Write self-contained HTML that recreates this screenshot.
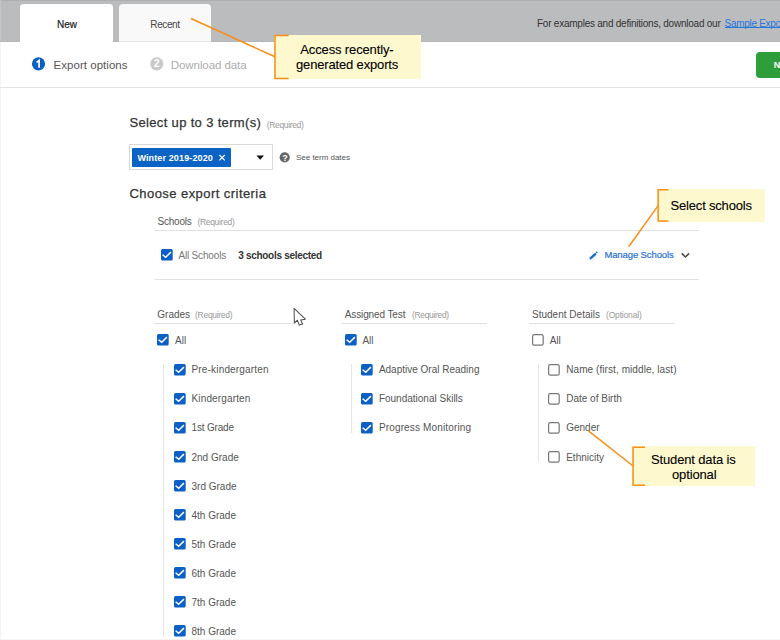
<!DOCTYPE html><html><head><meta charset="utf-8"><style>html,body{margin:0;padding:0;width:780px;height:640px;overflow:hidden;background:#fff;position:relative;}body{font-family:"Liberation Sans", sans-serif;} .t{position:absolute;white-space:nowrap;line-height:normal;font-family:"Liberation Sans", sans-serif;}</style></head><body>
<div style="position:absolute;left:0px;top:0px;width:780px;height:42px;background:#bbbcbe;"></div>
<div style="position:absolute;left:0px;top:0px;width:780px;height:1px;background:#aeafb1;"></div>
<div style="position:absolute;left:0px;top:0px;width:1px;height:42px;background:#c4c5c7;"></div>
<div style="position:absolute;left:0px;top:42px;width:1px;height:598px;background:#f3f3f3;"></div>
<div style="position:absolute;left:0px;top:41px;width:780px;height:1px;background:#b5b6b9;"></div>
<div style="position:absolute;left:20.2px;top:4.1px;width:93px;height:37.9px;background:#fff;border-radius:3.5px 3.5px 0 0;"></div>
<div style="position:absolute;left:118.7px;top:4.2px;width:92.5px;height:37.8px;background:#f9f9f9;border-radius:4px 4px 0 0;"></div>
<div style="position:absolute;left:118.7px;top:41px;width:92.5px;height:1px;background:#e6e6e6;"></div>
<div style="position:absolute;left:724.6px;top:27.2px;width:56px;height:1px;background:#2677dc;z-index:1;"></div>
<div style="position:absolute;left:0px;top:86.5px;width:780px;height:1px;background:#e3e3e3;"></div>
<svg style="position:absolute;left:0;top:0" width="780" height="640"><circle cx="38.5" cy="63.8" r="6.6" fill="#0b5fc0"/><circle cx="156.8" cy="63.8" r="6.6" fill="#c9c9c9"/><path d="M36.6 62.4 L39.1 60.4 L39.1 67.7" fill="none" stroke="#fff" stroke-width="1.7" stroke-linejoin="miter"/></svg>
<div style="position:absolute;left:756px;top:52.3px;width:40px;height:25.5px;background:#2e9e3a;border-radius:4px;"></div>
<div style="position:absolute;left:128.5px;top:144.2px;width:144.3px;height:26px;box-sizing:border-box;border:1px solid #d9d9d9;background:#fff;"></div>
<div style="position:absolute;left:132.3px;top:148px;width:98.7px;height:19px;background:#0b63c5;border-radius:1px;"></div>
<svg style="position:absolute;left:0;top:0" width="780" height="640"><path d="M219.4 155 L224.8 160.4 M224.8 155 L219.4 160.4" stroke="#fff" stroke-width="1.15"/><path d="M256.4 155.4 L264 155.4 L260.2 159.8 Z" fill="#111"/><circle cx="284.7" cy="157.3" r="5.1" fill="#666"/></svg>
<div style="position:absolute;left:154.6px;top:229.8px;width:544.4px;height:1px;background:#e1e1e1;"></div>
<div style="position:absolute;left:154.6px;top:278.6px;width:544.4px;height:1px;background:#e1e1e1;"></div>
<svg style="position:absolute;left:160.8px;top:249.2px" width="12" height="12"><rect x="0" y="0" width="11.7" height="11.6" rx="1.6" fill="#0a60c4"/><path d="M1.6 5.7 L4.7 8.3 L9.9 3.1" fill="none" stroke="#fff" stroke-width="1.5"/></svg>
<svg style="position:absolute;left:0;top:0" width="780" height="640"><path d="M590.7 258.1 L595.1 254.3" fill="none" stroke="#1a6fd6" stroke-width="2.5" stroke-linecap="round"/><path d="M596.6 251.3 L597.8 252.5 L596.8 253.5 L595.6 252.3 Z" fill="#1a6fd6"/><path d="M681.7 253.4 L685.4 257 L689.1 253.4" fill="none" stroke="#4a4a4a" stroke-width="1.6"/></svg>
<div style="position:absolute;left:154.2px;top:323.2px;width:139.8px;height:1px;background:#e1e1e1;"></div>
<svg style="position:absolute;left:157.3px;top:334.4px" width="12" height="12"><rect x="0" y="0" width="11.7" height="11.6" rx="1.6" fill="#0a60c4"/><path d="M1.6 5.7 L4.7 8.3 L9.9 3.1" fill="none" stroke="#fff" stroke-width="1.5"/></svg>
<div style="position:absolute;left:163.20000000000002px;top:363.5px;width:1px;height:273.5px;background:#e6e6e6;"></div>
<svg style="position:absolute;left:173.60000000000002px;top:363.5px" width="12" height="12"><rect x="0" y="0" width="11.7" height="11.6" rx="1.6" fill="#0a60c4"/><path d="M1.6 5.7 L4.7 8.3 L9.9 3.1" fill="none" stroke="#fff" stroke-width="1.5"/></svg>
<svg style="position:absolute;left:173.60000000000002px;top:392.56px" width="12" height="12"><rect x="0" y="0" width="11.7" height="11.6" rx="1.6" fill="#0a60c4"/><path d="M1.6 5.7 L4.7 8.3 L9.9 3.1" fill="none" stroke="#fff" stroke-width="1.5"/></svg>
<svg style="position:absolute;left:173.60000000000002px;top:421.62px" width="12" height="12"><rect x="0" y="0" width="11.7" height="11.6" rx="1.6" fill="#0a60c4"/><path d="M1.6 5.7 L4.7 8.3 L9.9 3.1" fill="none" stroke="#fff" stroke-width="1.5"/></svg>
<svg style="position:absolute;left:173.60000000000002px;top:450.68px" width="12" height="12"><rect x="0" y="0" width="11.7" height="11.6" rx="1.6" fill="#0a60c4"/><path d="M1.6 5.7 L4.7 8.3 L9.9 3.1" fill="none" stroke="#fff" stroke-width="1.5"/></svg>
<svg style="position:absolute;left:173.60000000000002px;top:479.74px" width="12" height="12"><rect x="0" y="0" width="11.7" height="11.6" rx="1.6" fill="#0a60c4"/><path d="M1.6 5.7 L4.7 8.3 L9.9 3.1" fill="none" stroke="#fff" stroke-width="1.5"/></svg>
<svg style="position:absolute;left:173.60000000000002px;top:508.79999999999995px" width="12" height="12"><rect x="0" y="0" width="11.7" height="11.6" rx="1.6" fill="#0a60c4"/><path d="M1.6 5.7 L4.7 8.3 L9.9 3.1" fill="none" stroke="#fff" stroke-width="1.5"/></svg>
<svg style="position:absolute;left:173.60000000000002px;top:537.86px" width="12" height="12"><rect x="0" y="0" width="11.7" height="11.6" rx="1.6" fill="#0a60c4"/><path d="M1.6 5.7 L4.7 8.3 L9.9 3.1" fill="none" stroke="#fff" stroke-width="1.5"/></svg>
<svg style="position:absolute;left:173.60000000000002px;top:566.92px" width="12" height="12"><rect x="0" y="0" width="11.7" height="11.6" rx="1.6" fill="#0a60c4"/><path d="M1.6 5.7 L4.7 8.3 L9.9 3.1" fill="none" stroke="#fff" stroke-width="1.5"/></svg>
<svg style="position:absolute;left:173.60000000000002px;top:595.98px" width="12" height="12"><rect x="0" y="0" width="11.7" height="11.6" rx="1.6" fill="#0a60c4"/><path d="M1.6 5.7 L4.7 8.3 L9.9 3.1" fill="none" stroke="#fff" stroke-width="1.5"/></svg>
<svg style="position:absolute;left:173.60000000000002px;top:625.04px" width="12" height="12"><rect x="0" y="0" width="11.7" height="11.6" rx="1.6" fill="#0a60c4"/><path d="M1.6 5.7 L4.7 8.3 L9.9 3.1" fill="none" stroke="#fff" stroke-width="1.5"/></svg>
<div style="position:absolute;left:341.8px;top:323.2px;width:145.0px;height:1px;background:#e1e1e1;"></div>
<svg style="position:absolute;left:344.7px;top:334.4px" width="12" height="12"><rect x="0" y="0" width="11.7" height="11.6" rx="1.6" fill="#0a60c4"/><path d="M1.6 5.7 L4.7 8.3 L9.9 3.1" fill="none" stroke="#fff" stroke-width="1.5"/></svg>
<div style="position:absolute;left:350.59999999999997px;top:363.5px;width:1px;height:69.6px;background:#e6e6e6;"></div>
<svg style="position:absolute;left:361.0px;top:363.5px" width="12" height="12"><rect x="0" y="0" width="11.7" height="11.6" rx="1.6" fill="#0a60c4"/><path d="M1.6 5.7 L4.7 8.3 L9.9 3.1" fill="none" stroke="#fff" stroke-width="1.5"/></svg>
<svg style="position:absolute;left:361.0px;top:392.56px" width="12" height="12"><rect x="0" y="0" width="11.7" height="11.6" rx="1.6" fill="#0a60c4"/><path d="M1.6 5.7 L4.7 8.3 L9.9 3.1" fill="none" stroke="#fff" stroke-width="1.5"/></svg>
<svg style="position:absolute;left:361.0px;top:421.62px" width="12" height="12"><rect x="0" y="0" width="11.7" height="11.6" rx="1.6" fill="#0a60c4"/><path d="M1.6 5.7 L4.7 8.3 L9.9 3.1" fill="none" stroke="#fff" stroke-width="1.5"/></svg>
<div style="position:absolute;left:529.2px;top:323.2px;width:144.79999999999995px;height:1px;background:#e1e1e1;"></div>
<svg style="position:absolute;left:532.0px;top:334.4px" width="12" height="12"><rect x="0.6" y="0.6" width="10.6" height="10.6" rx="1.6" fill="#fff" stroke="#777" stroke-width="1.2"/></svg>
<div style="position:absolute;left:537.9px;top:363.5px;width:1px;height:98.6px;background:#e6e6e6;"></div>
<svg style="position:absolute;left:548.3px;top:363.5px" width="12" height="12"><rect x="0.6" y="0.6" width="10.6" height="10.6" rx="1.6" fill="#fff" stroke="#777" stroke-width="1.2"/></svg>
<svg style="position:absolute;left:548.3px;top:392.56px" width="12" height="12"><rect x="0.6" y="0.6" width="10.6" height="10.6" rx="1.6" fill="#fff" stroke="#777" stroke-width="1.2"/></svg>
<svg style="position:absolute;left:548.3px;top:421.62px" width="12" height="12"><rect x="0.6" y="0.6" width="10.6" height="10.6" rx="1.6" fill="#fff" stroke="#777" stroke-width="1.2"/></svg>
<svg style="position:absolute;left:548.3px;top:450.68px" width="12" height="12"><rect x="0.6" y="0.6" width="10.6" height="10.6" rx="1.6" fill="#fff" stroke="#777" stroke-width="1.2"/></svg>
<div style="position:absolute;left:0px;top:638.6px;width:780px;height:1.4px;background:#f5f5f5;"></div>
<div style="position:absolute;z-index:5;left:274.2px;top:34.8px;width:146.7px;height:44.5px;background:#fef8cf;"></div>
<svg style="position:absolute;z-index:5;left:0;top:0" width="780" height="640"><path d="M191 18.5 L274.95 56.8" stroke="#f78f17" stroke-width="1.5" fill="none"/><path d="M288.7 35.55 L274.95 35.55 L274.95 78.55 L288.7 78.55" stroke="#f78f17" stroke-width="1.5" fill="none"/></svg>
<div style="position:absolute;z-index:5;left:657.4px;top:189px;width:107.60000000000002px;height:32.80000000000001px;background:#fef8cf;"></div>
<svg style="position:absolute;z-index:5;left:0;top:0" width="780" height="640"><path d="M628.7 246.7 L658.15 205.6" stroke="#f78f17" stroke-width="1.5" fill="none"/><path d="M668.4 189.75 L658.15 189.75 L658.15 221.05 L668.4 221.05" stroke="#f78f17" stroke-width="1.5" fill="none"/></svg>
<div style="position:absolute;z-index:5;left:632.3px;top:446.4px;width:122.70000000000005px;height:39.60000000000002px;background:#fef8cf;"></div>
<svg style="position:absolute;z-index:5;left:0;top:0" width="780" height="640"><path d="M588.5 430.8 L633.05 466" stroke="#f78f17" stroke-width="1.5" fill="none"/><path d="M645.0 447.15 L633.05 447.15 L633.05 485.25 L645.0 485.25" stroke="#f78f17" stroke-width="1.5" fill="none"/></svg>
<svg style="position:absolute;z-index:7;left:293px;top:307px" width="16" height="22"><path d="M1.1 1.4 L1.4 16 L4.4 13.2 L6.3 18.1 L9.6 16.9 L7.7 12.9 L12.4 12.2 Z" fill="#fff" stroke="#505050" stroke-width="1.05" stroke-linejoin="round"/></svg>
<span id="t_new" class="t" style="left:57.00px;top:19.15px;font-size:10px;font-weight:400;color:#222;letter-spacing:0.000px;-webkit-text-stroke:0.2px #222;">New</span>
<span id="t_recent" class="t" style="left:150.30px;top:18.95px;font-size:10px;font-weight:400;color:#444;letter-spacing:-0.381px;">Recent</span>
<span id="t_for" class="t" style="left:537.00px;top:17.65px;font-size:10px;font-weight:400;color:#333;letter-spacing:-0.237px;">For examples and definitions, download our</span>
<span id="t_sample" class="t" style="left:724.60px;top:17.65px;font-size:10px;font-weight:400;color:#2677dc;letter-spacing:0.000px;letter-spacing:-0.3px;">Sample Exports</span>
<span id="n2" class="t" style="left:153.90px;top:58.45px;font-size:10px;font-weight:700;color:#fff;letter-spacing:0.000px;">2</span>
<span id="t_export" class="t" style="left:53.50px;top:58.59px;font-size:11.5px;font-weight:400;color:#555;letter-spacing:0.041px;">Export options</span>
<span id="t_download" class="t" style="left:170.80px;top:58.59px;font-size:11.5px;font-weight:400;color:#adadad;letter-spacing:-0.077px;">Download data</span>
<span id="t_next" class="t" style="left:773.70px;top:60.26px;font-size:9px;font-weight:700;color:#fff;letter-spacing:0.000px;">N</span>
<span id="t_select" class="t" style="left:129.50px;top:115.23px;font-size:13px;font-weight:400;color:#333;letter-spacing:0.336px;-webkit-text-stroke:0.25px #333;">Select up to 3 term(s)</span>
<span id="t_req1" class="t" style="left:266.70px;top:119.61px;font-size:8.5px;font-weight:400;color:#999;letter-spacing:-0.336px;">(Required)</span>
<span id="t_chip" class="t" style="left:137.40px;top:152.75px;font-size:9px;font-weight:700;color:#fff;letter-spacing:0.130px;">Winter 2019-2020</span>
<span id="q" class="t" style="left:282.20px;top:152.66px;font-size:9px;font-weight:700;color:#fff;letter-spacing:0.000px;">?</span>
<span id="t_seeterm" class="t" style="left:296.00px;top:152.76px;font-size:8px;font-weight:400;color:#555;letter-spacing:-0.019px;">See term dates</span>
<span id="t_choose" class="t" style="left:129.50px;top:185.83px;font-size:13px;font-weight:400;color:#333;letter-spacing:0.441px;-webkit-text-stroke:0.25px #333;">Choose export criteria</span>
<span id="t_schools" class="t" style="left:157.50px;top:215.95px;font-size:10px;font-weight:400;color:#555;letter-spacing:-0.213px;">Schools</span>
<span id="t_req2" class="t" style="left:197.40px;top:217.31px;font-size:8.5px;font-weight:400;color:#999;letter-spacing:-0.303px;">(Required)</span>
<span id="t_allsch" class="t" style="left:178.40px;top:249.95px;font-size:10px;font-weight:400;color:#777;letter-spacing:-0.167px;">All Schools</span>
<span id="t_3sch" class="t" style="left:238.20px;top:249.95px;font-size:10px;font-weight:700;color:#333;letter-spacing:-0.295px;">3 schools selected</span>
<span id="t_manage" class="t" style="left:604.40px;top:249.40px;font-size:9.5px;font-weight:400;color:#2a72d4;letter-spacing:-0.109px;-webkit-text-stroke:0.2px #2a72d4;">Manage Schools</span>
<span id="c0_title" class="t" style="left:157.30px;top:308.55px;font-size:10px;font-weight:400;color:#555;letter-spacing:0.000px;">Grades</span>
<span id="c0_req" class="t" style="left:195.10px;top:309.91px;font-size:8.5px;font-weight:400;color:#999;letter-spacing:-0.303px;">(Required)</span>
<span id="c0_all" class="t" style="left:175.00px;top:335.25px;font-size:10px;font-weight:400;color:#555;letter-spacing:0.000px;">All</span>
<span id="c0_i0" class="t" style="left:191.50px;top:364.35px;font-size:10px;font-weight:400;color:#555;letter-spacing:0.172px;">Pre-kindergarten</span>
<span id="c0_i1" class="t" style="left:191.50px;top:393.41px;font-size:10px;font-weight:400;color:#555;letter-spacing:0.146px;">Kindergarten</span>
<span id="c0_i2" class="t" style="left:191.50px;top:422.47px;font-size:10px;font-weight:400;color:#555;letter-spacing:-0.169px;">1st Grade</span>
<span id="c0_i3" class="t" style="left:191.50px;top:451.53px;font-size:10px;font-weight:400;color:#555;letter-spacing:0.000px;">2nd Grade</span>
<span id="c0_i4" class="t" style="left:191.50px;top:480.59px;font-size:10px;font-weight:400;color:#555;letter-spacing:0.000px;">3rd Grade</span>
<span id="c0_i5" class="t" style="left:191.50px;top:509.65px;font-size:10px;font-weight:400;color:#555;letter-spacing:0.000px;">4th Grade</span>
<span id="c0_i6" class="t" style="left:191.50px;top:538.71px;font-size:10px;font-weight:400;color:#555;letter-spacing:0.000px;">5th Grade</span>
<span id="c0_i7" class="t" style="left:191.50px;top:567.77px;font-size:10px;font-weight:400;color:#555;letter-spacing:0.000px;">6th Grade</span>
<span id="c0_i8" class="t" style="left:191.50px;top:596.83px;font-size:10px;font-weight:400;color:#555;letter-spacing:0.000px;">7th Grade</span>
<span id="c0_i9" class="t" style="left:191.50px;top:625.89px;font-size:10px;font-weight:400;color:#555;letter-spacing:0.000px;">8th Grade</span>
<span id="c1_title" class="t" style="left:344.70px;top:308.55px;font-size:10px;font-weight:400;color:#555;letter-spacing:-0.106px;">Assigned Test</span>
<span id="c1_req" class="t" style="left:412.00px;top:309.91px;font-size:8.5px;font-weight:400;color:#999;letter-spacing:-0.336px;">(Required)</span>
<span id="c1_all" class="t" style="left:362.40px;top:335.25px;font-size:10px;font-weight:400;color:#555;letter-spacing:0.000px;">All</span>
<span id="c1_i0" class="t" style="left:378.90px;top:364.35px;font-size:10px;font-weight:400;color:#555;letter-spacing:-0.003px;">Adaptive Oral Reading</span>
<span id="c1_i1" class="t" style="left:378.90px;top:393.41px;font-size:10px;font-weight:400;color:#555;letter-spacing:0.000px;">Foundational Skills</span>
<span id="c1_i2" class="t" style="left:378.90px;top:422.47px;font-size:10px;font-weight:400;color:#555;letter-spacing:0.154px;">Progress Monitoring</span>
<span id="c2_title" class="t" style="left:532.00px;top:308.55px;font-size:10px;font-weight:400;color:#555;letter-spacing:0.013px;">Student Details</span>
<span id="c2_req" class="t" style="left:606.00px;top:309.91px;font-size:8.5px;font-weight:400;color:#999;letter-spacing:-0.177px;">(Optional)</span>
<span id="c2_all" class="t" style="left:549.70px;top:335.25px;font-size:10px;font-weight:400;color:#555;letter-spacing:0.000px;">All</span>
<span id="c2_i0" class="t" style="left:566.20px;top:364.35px;font-size:10px;font-weight:400;color:#555;letter-spacing:0.079px;">Name (first, middle, last)</span>
<span id="c2_i1" class="t" style="left:566.20px;top:393.41px;font-size:10px;font-weight:400;color:#555;letter-spacing:0.000px;">Date of Birth</span>
<span id="c2_i2" class="t" style="left:566.20px;top:422.47px;font-size:10px;font-weight:400;color:#555;letter-spacing:0.000px;">Gender</span>
<span id="c2_i3" class="t" style="left:566.20px;top:451.53px;font-size:10px;font-weight:400;color:#555;letter-spacing:0.000px;">Ethnicity</span>
<span id="co1a" class="t" style="left:300.30px;top:42.23px;font-size:13px;font-weight:400;color:#000;letter-spacing:-0.135px;z-index:6;-webkit-text-stroke:0.1px #000;">Access recently-</span>
<span id="co1b" class="t" style="left:296.00px;top:57.03px;font-size:13px;font-weight:400;color:#000;letter-spacing:-0.156px;z-index:6;-webkit-text-stroke:0.1px #000;">generated exports</span>
<span id="t_selsch" class="t" style="left:670.60px;top:197.94px;font-size:13px;font-weight:400;color:#000;letter-spacing:-0.194px;z-index:6;-webkit-text-stroke:0.1px #000;">Select schools</span>
<span id="co3a" class="t" style="left:651.00px;top:451.84px;font-size:13px;font-weight:400;color:#000;letter-spacing:-0.145px;z-index:6;-webkit-text-stroke:0.1px #000;">Student data is</span>
<span id="co3b" class="t" style="left:672.00px;top:466.74px;font-size:13px;font-weight:400;color:#000;letter-spacing:-0.136px;z-index:6;-webkit-text-stroke:0.1px #000;">optional</span>
</body></html>
